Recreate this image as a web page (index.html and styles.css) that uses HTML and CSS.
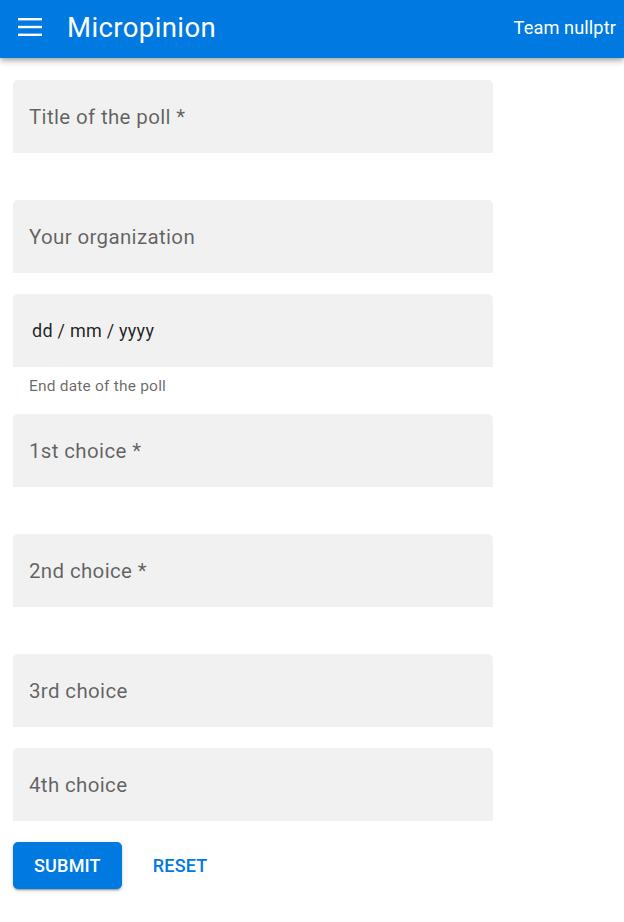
FILE: index.html
```html
<!DOCTYPE html>
<html lang="en">
<head>
<meta charset="utf-8">
<title>Micropinion</title>
<link rel="stylesheet" href="styles.css">
</head>
<body>
<header class="topbar">
  <button class="menu-btn" aria-label="Menu">
    <svg width="24" height="18" viewBox="0 0 24 18"><rect x="0" y="0" width="24" height="2.4" fill="#fff"/><rect x="0" y="7.8" width="24" height="2.4" fill="#fff"/><rect x="0" y="15.6" width="24" height="2.4" fill="#fff"/></svg>
  </button>
  <h1 class="brand">Micropinion</h1>
  <span class="team">Team nullptr</span>
</header>
<main class="content">
  <form class="poll-form">
    <div class="field-group with-helper">
      <div class="field"><span class="label">Title of the poll *</span></div>
      <div class="helper"></div>
    </div>
    <div class="field-group">
      <div class="field"><span class="label">Your organization</span></div>
    </div>
    <div class="field-group with-helper">
      <div class="field"><span class="date-value">dd / mm / yyyy</span></div>
      <div class="helper">End date of the poll</div>
    </div>
    <div class="field-group with-helper">
      <div class="field"><span class="label">1st choice *</span></div>
      <div class="helper"></div>
    </div>
    <div class="field-group with-helper">
      <div class="field"><span class="label">2nd choice *</span></div>
      <div class="helper"></div>
    </div>
    <div class="field-group">
      <div class="field"><span class="label">3rd choice</span></div>
    </div>
    <div class="field-group">
      <div class="field"><span class="label">4th choice</span></div>
    </div>
    <div class="actions">
      <button type="button" class="btn btn-raised">SUBMIT</button>
      <button type="button" class="btn btn-text">RESET</button>
    </div>
  </form>
</main>
</body>
</html>
```
FILE: styles.css
```css
* { box-sizing: border-box; }
html, body { margin: 0; padding: 0; background: #fff; }
body { font-family: Roboto, "Noto Sans", "Liberation Sans", sans-serif; }

.topbar {
  height: 58px;
  background: #0079e0;
  color: #fff;
  display: flex;
  align-items: center;
  padding: 0 8px 4px 18px;
  box-shadow: 0 2px 4px -1px rgba(0,0,0,.2), 0 4px 5px 0 rgba(0,0,0,.14), 0 1px 10px 0 rgba(0,0,0,.12);
  position: relative;
  z-index: 1;
}
.menu-btn {
  background: none;
  border: 0;
  padding: 0;
  margin: 0;
  width: 24px;
  height: 18px;
  display: flex;
}
.brand {
  margin: 0 0 0 25px;
  font-size: 27.5px;
  font-weight: 400;
  letter-spacing: 0.4px;
  flex: 1;
}
.team {
  font-size: 18.2px;
  letter-spacing: 0.1px;
}

.content {
  padding: 22px 13px;
}
.poll-form {
  width: 480px;
  display: flex;
  flex-direction: column;
}
.field-group {
  margin-bottom: 21px;
}
.field {
  height: 73px;
  background: #f1f1f1;
  border-radius: 5px 5px 0 0;
  display: flex;
  align-items: center;
  padding-left: 16px;
}
.label {
  font-size: 20.5px;
  letter-spacing: 0.35px;
  color: rgba(0,0,0,.6);
}
.date-value {
  font-size: 18px;
  letter-spacing: 0.25px;
  color: rgba(0,0,0,.87);
  padding-left: 3px;
}
.helper {
  height: 26px;
  padding: 10px 0 0 16px;
  font-size: 15.5px;
  letter-spacing: 0.2px;
  line-height: 18px;
  color: rgba(0,0,0,.6);
}
.actions {
  display: flex;
  gap: 21px;
  align-items: center;
}
.btn {
  font-family: inherit;
  font-size: 18px;
  font-weight: 500;
  letter-spacing: 0.2px;
  height: 47px;
  border: 0;
  border-radius: 5px;
  cursor: pointer;
}
.btn-raised {
  background: #0079e0;
  color: #fff;
  padding: 0 21px;
  box-shadow: 0 3px 1px -2px rgba(0,0,0,.2), 0 2px 2px 0 rgba(0,0,0,.14), 0 1px 5px 0 rgba(0,0,0,.12);
}
.btn-text {
  background: none;
  color: #0079e0;
  padding: 0 10px;
}
```
